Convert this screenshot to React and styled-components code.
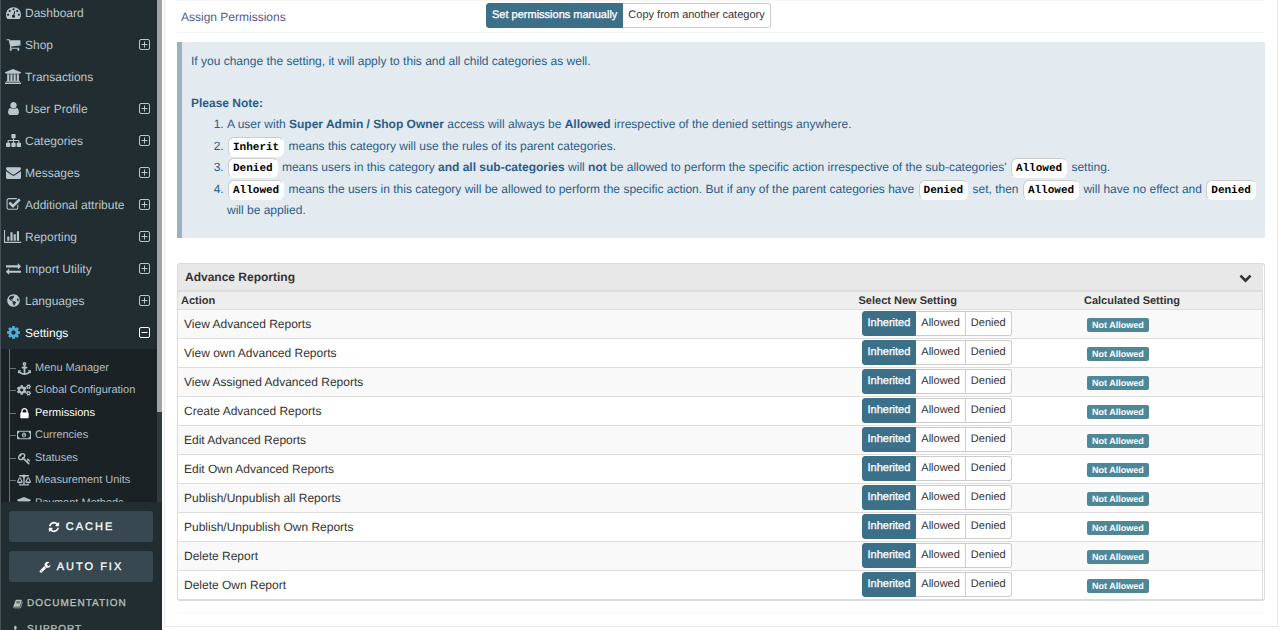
import React, { useState } from 'react';
import styled, { createGlobalStyle, css } from 'styled-components';
import { FaGlobeAmericas, FaCogs, FaRegMoneyBillAlt, FaBalanceScale } from 'react-icons/fa';

const GlobalStyle = createGlobalStyle`
  *, *::before, *::after { box-sizing: border-box; }
  body {
    margin: 0;
    background: #fff;
    color: #333;
    font: 12px/16px "Liberation Sans", Arial, sans-serif;
    text-rendering: geometricPrecision;
  }
  button { font-family: inherit; margin: 0; cursor: pointer; text-rendering: inherit; }
  ul { list-style: none; margin: 0; padding: 0; }
  a { text-decoration: none; }
`;

const glyphs = {
  dashboard: ['0 0 1792 1792', 'M384 1152q0-53-37.5-90.5t-90.5-37.5-90.5 37.5-37.5 90.5 37.5 90.5 90.5 37.5 90.5-37.5 37.5-90.5zm192-448q0-53-37.5-90.5t-90.5-37.5-90.5 37.5-37.5 90.5 37.5 90.5 90.5 37.5 90.5-37.5 37.5-90.5zm428 481l101-382q6-26-7.5-48.5t-38.5-29.5-48 6.5-30 39.5l-101 382q-60 5-107 43.5t-63 98.5q-20 77 20 146t117 89 146-20 89-117q16-60-6-117t-72-91zm660-33q0-53-37.5-90.5t-90.5-37.5-90.5 37.5-37.5 90.5 37.5 90.5 90.5 37.5 90.5-37.5 37.5-90.5zm-640-640q0-53-37.5-90.5t-90.5-37.5-90.5 37.5-37.5 90.5 37.5 90.5 90.5 37.5 90.5-37.5 37.5-90.5zm448 192q0-53-37.5-90.5t-90.5-37.5-90.5 37.5-37.5 90.5 37.5 90.5 90.5 37.5 90.5-37.5 37.5-90.5zm320 448q0 261-141 483-19 29-54 29h-1402q-35 0-54-29-141-221-141-483 0-182 71-348t191-286 286-191 348-71 348 71 286 191 191 286 71 348z'],
  cart: ['0 0 1792 1792', 'M704 1536q0 52-38 90t-90 38-90-38-38-90 38-90 90-38 90 38 38 90zm896 0q0 52-38 90t-90 38-90-38-38-90 38-90 90-38 90 38 38 90zm128-1088v512q0 24-16.5 42.5t-40.5 21.5l-1044 122q13 60 13 70 0 16-24 64h920q26 0 45 19t19 45-19 45-45 19h-1024q-26 0-45-19t-19-45q0-11 8-31.5t16-36 21.5-40 15.5-29.5l-177-823h-204q-26 0-45-19t-19-45 19-45 45-19h256q16 0 28.5 6.5t19.5 15.5 13 24.5 8 26 5.5 29.5 4.5 26h1201q26 0 45 19t19 45z'],
  bank: ['0 0 1920 1792', 'M960 0l960 384v128h-128q0 26-20.5 45t-48.5 19h-1526q-28 0-48.5-19t-20.5-45h-128v-128zm-704 640h256v768h128v-768h256v768h128v-768h256v768h128v-768h256v768h59q28 0 48.5 19t20.5 45v64h-1664v-64q0-26 20.5-45t48.5-19h59v-768zm1595 960q28 0 48.5 19t20.5 45v128h-1920v-128q0-26 20.5-45t48.5-19h1782z'],
  user: ['0 0 1792 1792', 'M1536 1399q0 109-62.5 187t-150.5 78h-854q-88 0-150.5-78t-62.5-187q0-85 8.5-160.5t31.5-152 58.5-131 94-89 134.5-34.5q131 128 313 128t313-128q76 0 134.5 34.5t94 89 58.5 131 31.5 152 8.5 160.5zm-256-887q0 159-112.5 271.5t-271.5 112.5-271.5-112.5-112.5-271.5 112.5-271.5 271.5-112.5 271.5 112.5 112.5 271.5z'],
  sitemap: ['0 0 1792 1792', 'M1792 1248v320q0 40-28 68t-68 28h-320q-40 0-68-28t-28-68v-320q0-40 28-68t68-28h96v-192h-512v192h96q40 0 68 28t28 68v320q0 40-28 68t-68 28h-320q-40 0-68-28t-28-68v-320q0-40 28-68t68-28h96v-192h-512v192h96q40 0 68 28t28 68v320q0 40-28 68t-68 28h-320q-40 0-68-28t-28-68v-320q0-40 28-68t68-28h96v-192q0-52 38-90t90-38h512v-192h-96q-40 0-68-28t-28-68v-320q0-40 28-68t68-28h320q40 0 68 28t28 68v320q0 40-28 68t-68 28h-96v192h512q52 0 90 38t38 90v192h96q40 0 68 28t28 68z'],
  envelope: ['0 0 1792 1792', 'M1792 710v794q0 66-47 113t-113 47h-1472q-66 0-113-47t-47-113v-794q44 49 101 87 362 246 497 345 57 42 92.5 65.5t94.5 48 110 24.5h2q51 0 110-24.5t94.5-48 92.5-65.5q170-123 498-345 57-39 100-87zm0-294q0 79-49 151t-122 123q-376 261-468 325-10 7-42.5 31t-54 38.5-52 32.5-57.5 27-50 9h-2q-23 0-50-9t-57.5-27-52-32.5-54-38.5-42.5-31q-91-64-262-182.5t-205-142.5q-62-42-117-115.5t-55-136.5q0-78 41.5-130t118.5-52h1472q65 0 112.5 47t47.5 113z'],
  check: ['0 0 1792 1792', 'M1472 930v318q0 119-84.5 203.5t-203.5 84.5h-832q-119 0-203.5-84.5t-84.5-203.5v-832q0-119 84.5-203.5t203.5-84.5h832q63 0 117 25 15 7 18 23 3 17-9 29l-49 49q-10 10-23 10-3 0-9-2-23-6-45-6h-832q-66 0-113 47t-47 113v832q0 66 47 113t113 47h832q66 0 113-47t47-113v-254q0-13 9-22l64-64q10-10 23-10 6 0 12 3 20 8 20 29zm231-489l-814 814q-24 24-57 24t-57-24l-430-430q-24-24-24-57t24-57l110-110q24-24 57-24t57 24l263 263 647-647q24-24 57-24t57 24l110 110q24 24 24 57t-24 57z'],
  chart: ['0 0 2048 1792', 'M640 896v512h-256v-512h256zm384-512v1024h-256v-1024h256zm1024 1152v128h-2048v-1536h128v1408h1920zm-640-896v768h-256v-768h256zm384-384v1152h-256v-1152h256z'],
  exchange: ['0 0 1792 1792', 'M1792 1184v192q0 13-9.5 22.5t-22.5 9.5h-1376v192q0 13-9.5 22.5t-22.5 9.5q-12 0-24-10l-319-320q-9-9-9-22 0-14 9-23l320-320q9-9 23-9 13 0 22.5 9.5t9.5 22.5v192h1376q13 0 22.5 9.5t9.5 22.5zm0-544q0 14-9 23l-320 320q-9 9-23 9-13 0-22.5-9.5t-9.5-22.5v-192h-1376q-13 0-22.5-9.5t-9.5-22.5v-192q0-13 9.5-22.5t22.5-9.5h1376v-192q0-14 9-23t23-9q12 0 24 10l319 319q9 9 9 23z'],
  cog: ['0 0 1792 1792', 'M1152 896q0-106-75-181t-181-75-181 75-75 181 75 181 181 75 181-75 75-181zm512-109v222q0 12-8 23t-20 13l-185 28q-19 54-39 91 35 50 107 138 10 12 10 25t-9 23q-27 37-99 108t-94 71q-12 0-26-9l-138-108q-44 23-91 38-16 136-29 186-7 28-36 28h-222q-14 0-24.5-8.5t-11.5-21.5l-28-184q-49-16-90-37l-141 107q-10 9-25 9-14 0-25-11-126-114-165-168-7-10-7-23 0-12 8-23 15-21 51-66.5t54-70.5q-27-50-41-99l-183-27q-13-2-21-12.5t-8-23.5v-222q0-12 8-23t19-13l186-28q14-46 39-92-40-57-107-138-10-12-10-24 0-10 9-23 26-36 98.5-107.5t94.5-71.5q13 0 26 10l138 107q44-23 91-38 16-136 29-186 7-28 36-28h222q14 0 24.5 8.5t11.5 21.5l28 184q49 16 90 37l142-107q9-9 24-9 13 0 25 10 129 119 165 170 7 8 7 22 0 12-8 23-15 21-51 66.5t-54 70.5q26 50 41 98l183 28q13 2 21 12.5t8 23.5z'],
  anchor: ['0 0 1792 1792', 'M960 256q0-26-19-45t-45-19-45 19-19 45 19 45 45 19 45-19 19-45zm832 928v352q0 22-20 30-8 2-12 2-13 0-23-9l-93-93q-119 143-318.5 226.5t-429.5 83.5-429.5-83.5-318.5-226.5l-93 93q-9 9-23 9-4 0-12-2-20-8-20-30v-352q0-14 9-23t23-9h352q22 0 30 20 8 19-7 35l-100 100q67 91 189.5 153.5t271.5 82.5v-647h-192q-26 0-45-19t-19-45v-128q0-26 19-45t45-19h192v-163q-58-34-93-92.5t-35-128.5q0-106 75-181t181-75 181 75 75 181q0 70-35 128.5t-93 92.5v163h192q26 0 45 19t19 45v128q0 26-19 45t-45 19h-192v647q149-20 271.5-82.5t189.5-153.5l-100-100q-15-16-7-35 8-20 30-20h352q14 0 23 9t9 23z'],
  lock: ['0 0 1792 1792', 'M640 768h512v-192q0-106-75-181t-181-75-181 75-75 181v192zm832 96v576q0 40-28 68t-68 28h-960q-40 0-68-28t-28-68v-576q0-40 28-68t68-28h32v-192q0-184 132-316t316-132 316 132 132 316v192h32q40 0 68 28t28 68z'],
  key: ['0 0 1792 1792', 'M832 512q0-80-56-136t-136-56-136 56-56 136q0 42 19 83-41-19-83-19-80 0-136 56t-56 136 56 136 136 56 136-56 56-136q0-42-19-83 41 19 83 19 80 0 136-56t56-136zm851 704q0 17-49 66t-66 49q-9 0-28.5-16t-36.5-33-38.5-40-24.5-26l-96 96 220 220q28 28 28 68 0 42-39 81t-81 39q-40 0-68-28l-671-671q-176 131-365 131-163 0-265.5-102.5t-102.5-265.5q0-160 95-313t248-248 313-95q163 0 265.5 102.5t102.5 265.5q0 189-131 365l355 355 96-96q-3-3-26-24.5t-40-38.5-33-36.5-16-28.5q0-17 49-66t66-49q13 0 23 10 6 6 46 44.5t82 79.5 86.5 86 73 78 28.5 41z'],
  refresh: ['0 0 1792 1792', 'M1639 1056q0 5-1 7-64 268-268 434.5t-478 166.5q-146 0-282.5-55t-243.5-157l-129 129q-19 19-45 19t-45-19-19-45v-448q0-26 19-45t45-19h448q26 0 45 19t19 45-19 45l-137 137q71 66 161 102t187 36q134 0 250-65t186-179q11-17 53-117 8-23 30-23h192q13 0 22.5 9.5t9.5 22.5zm25-800v448q0 26-19 45t-45 19h-448q-26 0-45-19t-19-45 19-45l138-138q-148-137-349-137-134 0-250 65t-186 179q-11 17-53 117-8 23-30 23h-199q-13 0-22.5-9.5t-9.5-22.5v-7q65-268 270-434.5t480-166.5q146 0 284 55.5t245 156.5l130-129q19-19 45-19t45 19 19 45z'],
  wrench: ['0 0 1792 1792', 'M448 1472q0-26-19-45t-45-19-45 19-19 45 19 45 45 19 45-19 19-45zm644-420l-682 682q-37 37-90 37-52 0-91-37l-106-108q-38-36-38-90 0-53 38-91l681-681q39 98 114.5 173.5t173.5 114.5zm634-435q0 39-23 106-47 134-164.5 217.5t-258.5 83.5q-185 0-316.5-131.5t-131.5-316.5 131.5-316.5 316.5-131.5q58 0 121.5 16.5t107.5 46.5q16 11 16 28t-16 28l-293 169v224l193 107q5-3 79-48.5t135.5-81 70.5-35.5q15 0 23.5 10t8.5 25z'],
  book: ['0 0 1792 1792', 'M1703 478q40 57 18 129l-275 906q-19 64-76.5 107.5t-122.5 43.5h-923q-77 0-148.5-53.5t-99.5-131.5q-24-67-2-127 0-4 3-27t4-37q1-8-3-21.5t-3-19.5q2-11 8-21t16.5-23.5 16.5-23.5q23-38 45-91.5t30-91.5q3-10 .5-30t-.5-28q3-11 17-28t17-23q21-36 42-92t25-90q1-9-2.5-32t.5-28q4-13 22-30.5t22-22.5q19-26 42.5-84.5t27.5-96.5q1-8-3-25.5t-2-26.5q2-8 9-18t18-23 17-21q8-12 16.5-30.5t15-35 16-36 19.5-32 26.5-23.5 36-11.5 47.5 5.5l-1 3q38-9 51-9h761q74 0 114 56t18 130l-274 906q-36 119-71.5 153.5t-128.5 34.5h-869q-27 0-38 15-11 16-1 43 24 70 144 70h923q29 0 56-15.5t35-41.5l300-987q7-22 5-57 38 15 59 43zm-1064 2q-4 13 2 22.5t20 9.5h608q13 0 25.5-9.5t16.5-22.5l21-64q4-13-2-22.5t-20-9.5h-608q-13 0-25.5 9.5t-16.5 22.5zm-83 256q-4 13 2 22.5t20 9.5h608q13 0 25.5-9.5t16.5-22.5l21-64q4-13-2-22.5t-20-9.5h-608q-13 0-25.5 9.5t-16.5 22.5z'],
  phone: ['0 0 1792 1792', 'M1600 1240q0 27-10 70.5t-21 68.5q-21 50-122 106-94 51-186 51-27 0-53-3.5t-57.5-12.5-47-14.5-55.5-20.5-49-18q-98-35-175-83-127-79-264-216t-216-264q-48-77-83-175-3-9-18-49t-20.5-55.5-14.5-47-12.5-57.5-3.5-53q0-92 51-186 56-101 106-122 25-11 68.5-21t70.5-10q14 0 21 3 18 6 53 76 11 19 30 54t35 63.5 31 53.5q3 4 17.5 25t21.5 35.5 7 28.5q0 20-28.5 50t-62 55-62 53-28.5 46q0 9 5 22.5t8.5 20.5 14 24 11.5 19q76 137 174 235t235 174q2 1 19 11.5t24 14 20.5 8.5 22.5 5q18 0 46-28.5t53-62 55-62 50-28.5q14 0 28.5 7t35.5 21.5 25 17.5q25 15 53.5 31t63.5 35 54 30q70 35 76 53 3 7 3 21z'],
  chevron: ['0 0 1792 1792', 'M1683 808l-742 741q-19 19-45 19t-45-19l-742-741q-19-19-19-45.5t19-45.5l166-165q19-19 45-19t45 19l531 531 531-531q19-19 45-19t45 19l166 165q19 19 19 45.5t-19 45.5z'],
};

const Glyph = ({ name, size = 15 }) => {
  const [viewBox, d] = glyphs[name];
  return (
    <svg viewBox={viewBox} height={size} fill="currentColor" aria-hidden="true">
      <path d={d} />
    </svg>
  );
};

const ExpandMark = ({ open }) => (
  <svg width="11" height="11" viewBox="0 0 11 11" fill="none" stroke="currentColor" aria-hidden="true">
    <rect x="0.5" y="0.5" width="10" height="10" rx="1.5" />
    <path d={open ? 'M2.5 5.5h6' : 'M2.5 5.5h6M5.5 2.5v6'} />
  </svg>
);

const Page = styled.div`
  display: flex;
  align-items: flex-start;
  min-height: 100vh;
`;

const Sidebar = styled.aside`
  position: sticky;
  top: 0;
  flex: none;
  display: flex;
  flex-direction: column;
  width: 162px;
  height: 100vh;
  overflow: hidden;
  background: #222d32;
  border-left: 1px solid #465257;
`;

const MenuViewport = styled.div`
  flex: 1;
  min-height: 0;
  display: flex;
  overflow: hidden;
`;

const Menu = styled.nav`
  flex: 1;
  margin-top: -3px;
`;

const Track = styled.div`
  width: 5px;
  background: #2f3b3f;
`;

const Thumb = styled.div`
  height: 82%;
  background: #a0a4a7;
`;

const MenuLink = styled.a`
  display: flex;
  align-items: center;
  height: 32px;
  padding: 0 7px 0 4px;
  color: ${(p) => (p.$active ? '#fff' : '#b8c7ce')};
  > svg { margin-bottom: 2px; }
`;

const MenuIcon = styled.span`
  display: flex;
  justify-content: center;
  width: 16px;
  margin: 0 4px 2px 0;
  color: ${(p) => (p.$active ? '#4faed8' : 'inherit')};
  svg { flex: none; }
`;

const MenuText = styled.span`
  flex: 1;
  white-space: nowrap;
`;

const SubMenu = styled.ul`
  padding-left: 8px;
  background: #1b2225;
`;

const SubItem = styled.li`
  height: 22px;
  border-left: 1px solid #687073;
  &:nth-child(even) { height: 23px; }
  &:first-child { height: 29px; padding-top: 7px; }
`;

const SubLink = styled.a`
  display: flex;
  align-items: center;
  height: 24px;
  font-size: 11px;
  white-space: nowrap;
  color: ${(p) => (p.$active ? '#fff' : '#b0bfc5')};
  &::before {
    content: '';
    width: 6px;
    border-top: 1px solid #687073;
  }
`;

const SubIcon = styled.span`
  display: flex;
  justify-content: center;
  width: 16px;
  margin-right: 3px;
  svg { flex: none; }
`;

const SidebarFooter = styled.div`
  flex: none;
  height: 128px;
  padding: 9px 9px 0 8px;
  overflow: hidden;
`;

const ToolButton = styled.button`
  display: flex;
  align-items: center;
  justify-content: center;
  gap: 6px;
  width: 100%;
  height: 31px;
  margin-bottom: 9px;
  padding: 0;
  border: 0;
  border-radius: 3px;
  background: #374850;
  color: #fff;
  font-size: 11px;
  letter-spacing: 2px;
  -webkit-text-stroke: 0.3px #fff;
`;

const HelpLink = styled.a`
  display: flex;
  align-items: center;
  gap: 4px;
  height: 26px;
  padding-left: 4px;
  color: #b8c2bb;
  font-size: 10px;
  letter-spacing: 1px;
  -webkit-text-stroke: 0.3px #b8c2bb;
`;

const Content = styled.main`
  flex: 1;
  min-width: 0;
  margin: 0 2px;
  padding: 0 12px 13px;
  border: 1px solid #e9e9e9;
  border-top: 0;
`;

const Heading = styled.header`
  display: grid;
  grid-template-columns: 309px auto 1fr;
  align-items: center;
  height: 33px;
  margin-bottom: 9px;
  padding-bottom: 2px;
  border: 1px solid #f6f6f6;
  border-width: 1px 0;
`;

const Title = styled.h1`
  margin: 0;
  padding: 2px 0 0 4px;
  color: #555a8c;
  font-size: 12px;
  font-weight: 400;
`;

const Group = styled.div`
  display: inline-flex;
  vertical-align: top;
`;

const Option = styled.button`
  height: 25px;
  padding: 0 5px 2px;
  border: 1px solid #ccc;
  border-left-width: 0;
  background: #fff;
  color: #333;
  font-size: 11px;
  line-height: 16px;
  white-space: nowrap;
  &:first-child { border-left-width: 1px; border-radius: 3px 0 0 3px; }
  &:last-child { border-radius: 0 3px 3px 0; }
  ${(p) => p.$on && css`
    border-color: #3c6f88;
    background: #3c6f88;
    color: #fff;
    -webkit-text-stroke: 0.3px #fff;
  `}
`;

const Notice = styled.section`
  margin-bottom: 25px;
  padding: 9px 0 17px 9px;
  border-left: 5px solid #99b3c3;
  background: #e3ebf0;
  color: #2b5c8a;
  line-height: 21px;
  p { margin: 0 0 21px; }
  h2 { margin: 0; font-size: 12px; }
  ol { margin: 0; padding: 0 0 0 36px; }
  li:nth-child(odd) { margin-bottom: 1px; }
`;

const Tag = styled.code`
  display: inline-block;
  height: 20px;
  margin: 0 1px;
  padding: 0 4px;
  border: 1px solid #fff;
  border-top-color: #ccc;
  border-left-color: #ccc;
  border-radius: 6px;
  background: #fff;
  color: #000;
  font: bold 11px/20px "Liberation Mono", monospace;
  vertical-align: middle;
`;

const Panel = styled.section`
  padding-right: 1px;
  border: 1px solid #d8dce0;
  border-bottom-width: 2px;
  border-radius: 3px;
`;

const PanelToggle = styled.button`
  display: flex;
  justify-content: space-between;
  align-items: center;
  width: 100%;
  height: 28px;
  padding: 0 11px 0 7px;
  border: 0;
  border-bottom: 2px solid #dcdcdc;
  background: #e8e8e8;
  color: #333;
  font-size: 12px;
  font-weight: 700;
`;

const Table = styled.table`
  width: 100%;
  table-layout: fixed;
  border-collapse: separate;
  border-spacing: 0;
  border-right: 1px solid #ddd;
`;

const HeadCell = styled.th`
  width: ${(p) => p.$width};
  height: 17px;
  padding: 1px 3px 0;
  background: #eee;
  font-size: 11px;
  line-height: 16px;
  text-align: left;
`;

const Row = styled.tr`
  background: ${(p) => (p.$striped ? '#f9f9f9' : '#fff')};
`;

const Cell = styled.td`
  height: 29px;
  padding: 0 6px 1px;
  border-top: 1px solid #ddd;
`;

const Badge = styled.span`
  display: block;
  width: max-content;
  margin-top: 2px;
  padding: 0 5px;
  border-radius: 2px;
  background: #4f8797;
  color: #fff;
  font-size: 9px;
  font-weight: 700;
  line-height: 14px;
`;

const EndRule = styled.div`
  margin-top: 11px;
  border-top: 1px solid #f6f6f6;
`;

const menu = [
  ['Dashboard', <Glyph name="dashboard" />, false],
  ['Shop', <Glyph name="cart" />, true],
  ['Transactions', <Glyph name="bank" />, false],
  ['User Profile', <Glyph name="user" />, true],
  ['Categories', <Glyph name="sitemap" />, true],
  ['Messages', <Glyph name="envelope" />, true],
  ['Additional attribute', <Glyph name="check" />, true],
  ['Reporting', <Glyph name="chart" />, true],
  ['Import Utility', <Glyph name="exchange" />, true],
  ['Languages', <FaGlobeAmericas size={13} />, true],
  ['Settings', <Glyph name="cog" />, true],
];

const settingsMenu = [
  ['Menu Manager', <Glyph name="anchor" size={13} />],
  ['Global Configuration', <FaCogs size={14} />],
  ['Permissions', <Glyph name="lock" size={13} />],
  ['Currencies', <FaRegMoneyBillAlt size={14} />],
  ['Statuses', <Glyph name="key" size={13} />],
  ['Measurement Units', <FaBalanceScale size={14} />],
  ['Payment Methods', <Glyph name="bank" size={13} />],
];

const actions = [
  'View Advanced Reports',
  'View own Advanced Reports',
  'View Assigned Advanced Reports',
  'Create Advanced Reports',
  'Edit Advanced Reports',
  'Edit Own Advanced Reports',
  'Publish/Unpublish all Reports',
  'Publish/Unpublish Own Reports',
  'Delete Report',
  'Delete Own Report',
];

function Choice({ options, label }) {
  const [selected, setSelected] = useState(options[0]);
  return (
    <Group role="group" aria-label={label}>
      {options.map((o) => (
        <Option key={o} type="button" $on={o === selected} aria-pressed={o === selected} onClick={() => setSelected(o)}>
          {o}
        </Option>
      ))}
    </Group>
  );
}

export default function App() {
  const [open, setOpen] = useState(true);
  return (
    <>
      <GlobalStyle />
      <Page>
        <Sidebar>
          <MenuViewport>
            <Menu>
              <ul>
                {menu.map(([label, icon, expandable]) => {
                  const active = label === 'Settings';
                  return (
                    <li key={label}>
                      <MenuLink href="#" $active={active}>
                        <MenuIcon $active={active}>{icon}</MenuIcon>
                        <MenuText>{label}</MenuText>
                        {expandable && <ExpandMark open={active} />}
                      </MenuLink>
                    </li>
                  );
                })}
              </ul>
              <SubMenu>
                {settingsMenu.map(([label, icon]) => (
                  <SubItem key={label}>
                    <SubLink href="#" $active={label === 'Permissions'}>
                      <SubIcon>{icon}</SubIcon>
                      {label}
                    </SubLink>
                  </SubItem>
                ))}
              </SubMenu>
            </Menu>
            <Track>
              <Thumb />
            </Track>
          </MenuViewport>
          <SidebarFooter>
            <ToolButton type="button"><Glyph name="refresh" size={12} />CACHE</ToolButton>
            <ToolButton type="button"><Glyph name="wrench" size={12} />AUTO FIX</ToolButton>
            <HelpLink href="#"><Glyph name="book" size={10} />DOCUMENTATION</HelpLink>
            <HelpLink href="#"><Glyph name="phone" size={10} />SUPPORT</HelpLink>
          </SidebarFooter>
        </Sidebar>
        <Content>
          <Heading>
            <Title>Assign Permissions</Title>
            <Choice label="Assign Permissions" options={['Set permissions manually', 'Copy from another category']} />
          </Heading>
          <Notice>
            <p>If you change the setting, it will apply to this and all child categories as well.</p>
            <h2>Please Note:</h2>
            <ol>
              <li>A user with <b>Super Admin / Shop Owner</b> access will always be <b>Allowed</b> irrespective of the denied settings anywhere.</li>
              <li><Tag>Inherit</Tag> means this category will use the rules of its parent categories.</li>
              <li><Tag>Denied</Tag> means users in this category <b>and all sub-categories</b> will <b>not</b> be allowed to perform the specific action irrespective of the sub-categories' <Tag>Allowed</Tag> setting.</li>
              <li><Tag>Allowed</Tag> means the users in this category will be allowed to perform the specific action. But if any of the parent categories have <Tag>Denied</Tag> set, then <Tag>Allowed</Tag> will have no effect and <Tag>Denied</Tag> will be applied.</li>
            </ol>
          </Notice>
          <Panel>
            <PanelToggle type="button" aria-expanded={open} onClick={() => setOpen(!open)}>
              Advance Reporting
              <Glyph name="chevron" size={13} />
            </PanelToggle>
            {open && (
              <Table>
                <thead>
                  <tr>
                    <HeadCell scope="col" $width="62.5%">Action</HeadCell>
                    <HeadCell scope="col" $width="20.8%">Select New Setting</HeadCell>
                    <HeadCell scope="col">Calculated Setting</HeadCell>
                  </tr>
                </thead>
                <tbody>
                  {actions.map((action, i) => (
                    <Row key={action} $striped={i % 2 === 0}>
                      <Cell>{action}</Cell>
                      <Cell><Choice label={action} options={['Inherited', 'Allowed', 'Denied']} /></Cell>
                      <Cell><Badge>Not Allowed</Badge></Cell>
                    </Row>
                  ))}
                </tbody>
              </Table>
            )}
          </Panel>
          <EndRule />
        </Content>
      </Page>
    </>
  );
}
